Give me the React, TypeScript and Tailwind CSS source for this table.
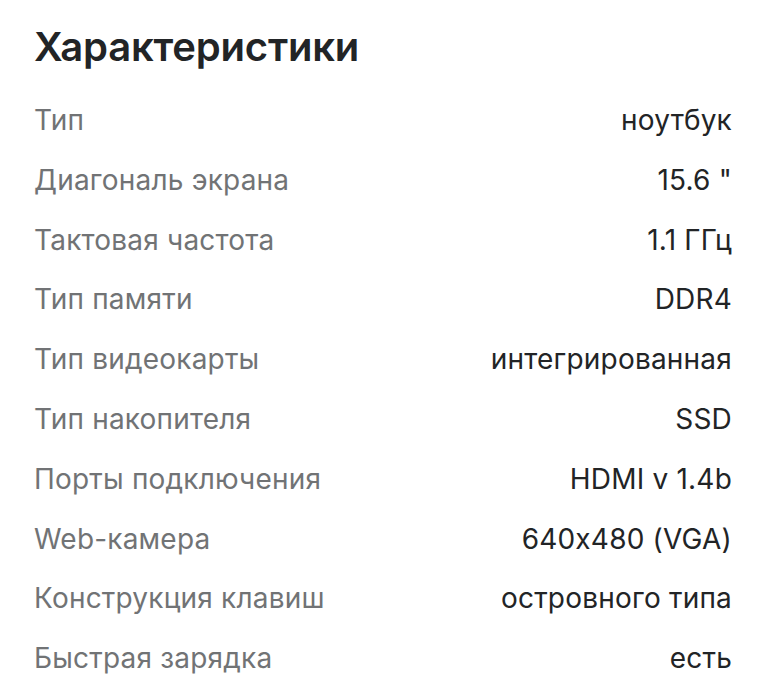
const SPECS: { label: string; value: string }[] = [
  { label: "Тип", value: "ноутбук" },
  { label: "Диагональ экрана", value: '15.6 "' },
  { label: "Тактовая частота", value: "1.1 ГГц" },
  { label: "Тип памяти", value: "DDR4" },
  { label: "Тип видеокарты", value: "интегрированная" },
  { label: "Тип накопителя", value: "SSD" },
  { label: "Порты подключения", value: "HDMI v 1.4b" },
  { label: "Web-камера", value: "640x480 (VGA)" },
  { label: "Конструкция клавиш", value: "островного типа" },
  { label: "Быстрая зарядка", value: "есть" },
];

export default function App() {
  return (
    <div className="min-h-screen bg-white px-[34px] pt-[22px] font-['Inter',sans-serif] [font-feature-settings:'calt'_0]">
      <h2 className="text-[40px] leading-[50px] font-semibold tracking-[-0.2px] text-[#222426]">
        Характеристики
      </h2>
      <dl className="mt-[19px]">
        {SPECS.map((spec) => (
          <div
            key={spec.label}
            className="flex items-center justify-between h-[59.8px] text-[28px] leading-[59.8px] tracking-[0.2px]"
          >
            <dt className="text-[#717375]">{spec.label}</dt>
            <dd className="text-[#222426]">{spec.value}</dd>
          </div>
        ))}
      </dl>
    </div>
  );
}
